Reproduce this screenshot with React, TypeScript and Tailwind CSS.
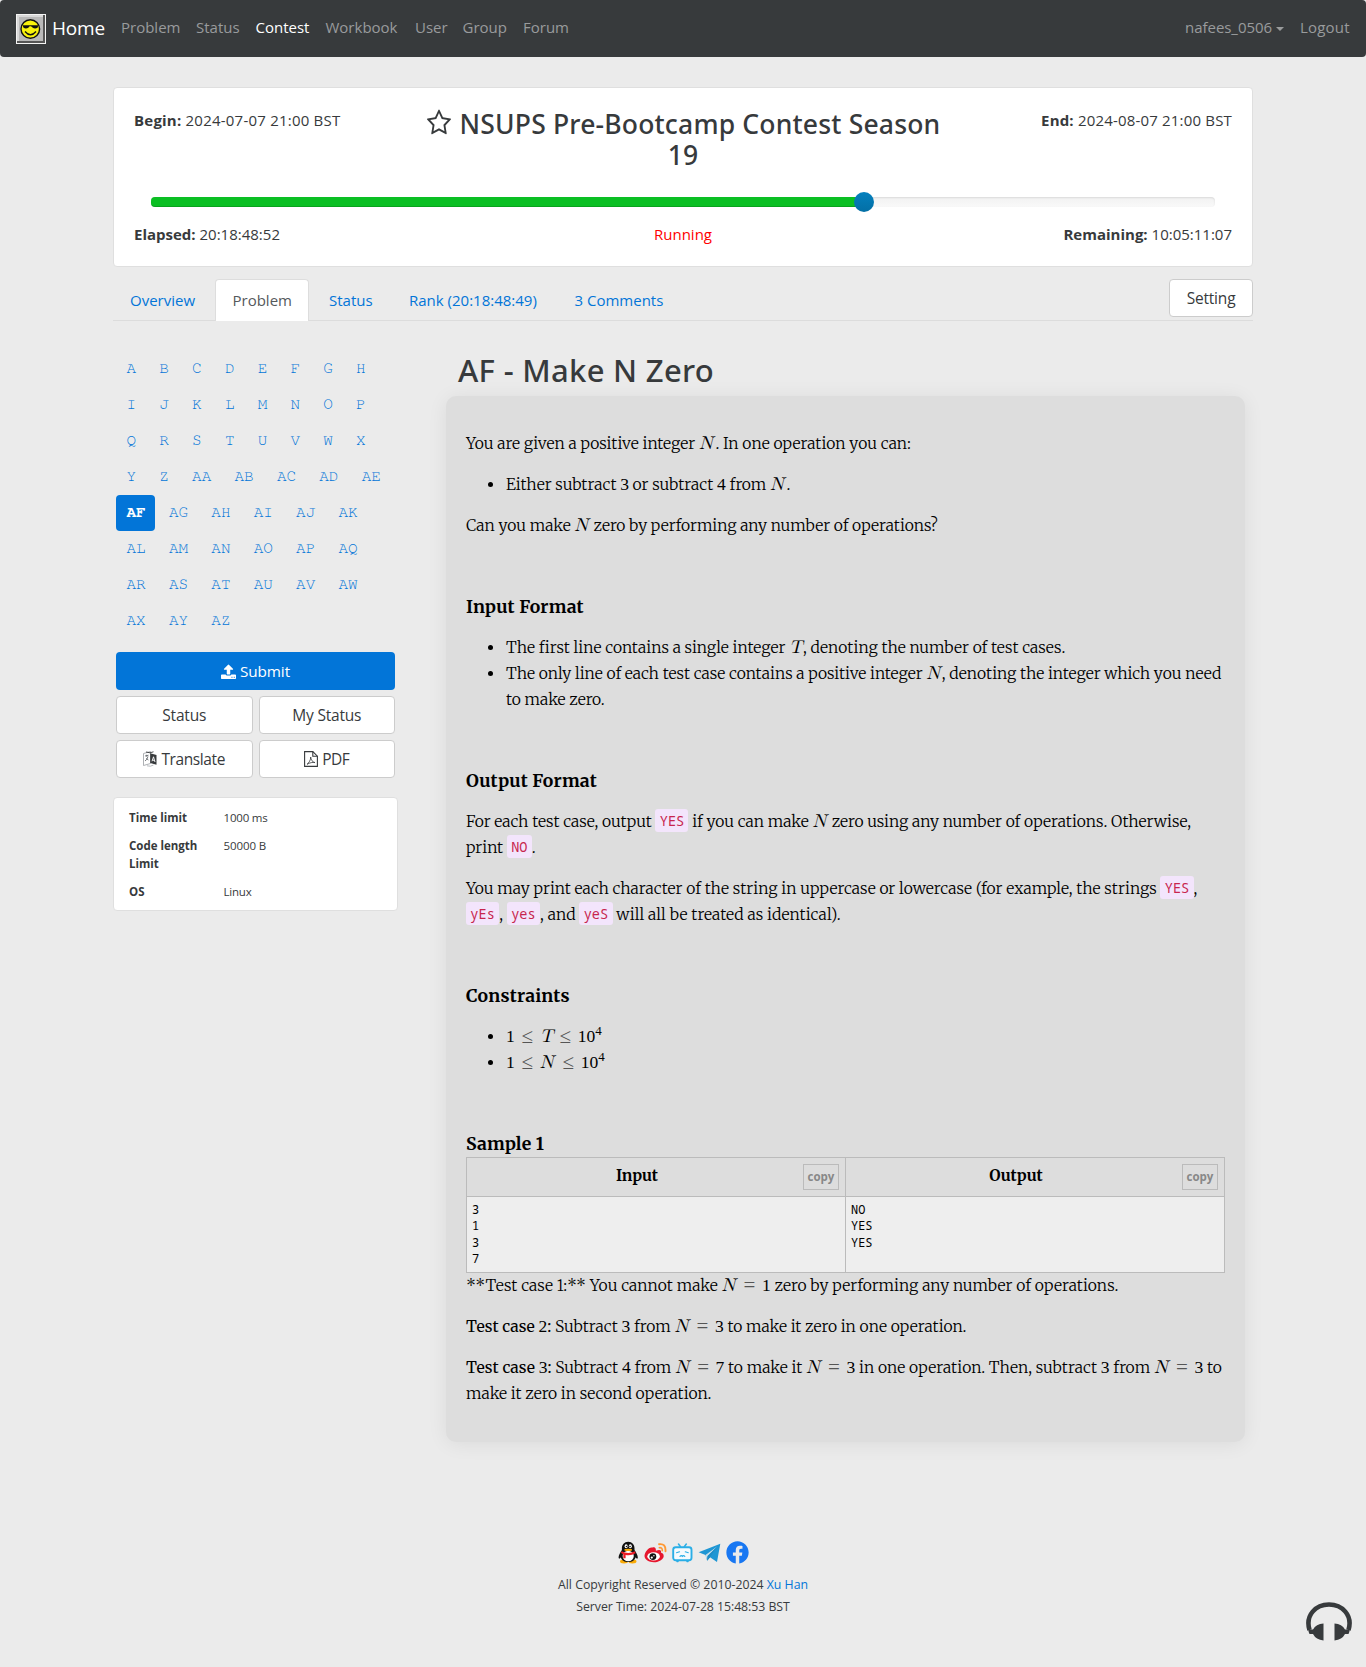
import type { ReactNode } from 'react';
import { FaFacebook } from 'react-icons/fa';

const problemRows = [
  ['A', 'B', 'C', 'D', 'E', 'F', 'G', 'H'],
  ['I', 'J', 'K', 'L', 'M', 'N', 'O', 'P'],
  ['Q', 'R', 'S', 'T', 'U', 'V', 'W', 'X'],
  ['Y', 'Z', 'AA', 'AB', 'AC', 'AD', 'AE'],
  ['AF', 'AG', 'AH', 'AI', 'AJ', 'AK'],
  ['AL', 'AM', 'AN', 'AO', 'AP', 'AQ'],
  ['AR', 'AS', 'AT', 'AU', 'AV', 'AW'],
  ['AX', 'AY', 'AZ'],
];

function Logo() {
  return (
    <svg width="30" height="30" viewBox="0 0 30 30" className="shrink-0">
      <rect width="30" height="30" fill="#f4f4f4" />
      <rect x="1" y="1" width="28" height="28" fill="#555" />
      <rect x="1" y="1" width="26" height="26" fill="#d8d8d8" />
      <rect x="3" y="3" width="24" height="24" fill="#b9b9b9" />
      <circle cx="14.3" cy="15" r="9.3" fill="#f8f20c" stroke="#111" strokeWidth="1.4" />
      <path d="M6.500 11.200h16l-1 2.500q-2.600 1.600-5-.3L15 12.300h-1.400l-1 1.200q-2.600 1.800-5 .2z" fill="#111" />
      <path d="M9 17.500q5.500 6.500 11 0" fill="none" stroke="#111" strokeWidth="1.300" />
    </svg>
  );
}

function StarIcon() {
  return (
    <svg width="26" height="28" viewBox="0 0 1792 1792" preserveAspectRatio="none" fill="currentColor" className="mr-[8px] inline-block align-[-3px]">
      <path d="M1201 1004l306-297-422-62-189-382-189 382-422 62 306 297-73 421 378-199 377 199zm527-357q0 22-26 48l-363 354 86 500q1 7 1 20 0 50-41 50-19 0-40-12l-449-236-449 236q-22 12-40 12-21 0-31.500-14.500t-10.500-35.500q0-6 2-20l86-500-364-354q-25-27-25-48 0-37 56-46l502-73 225-455q19-41 49-41t49 41l225 455 502 73q56 9 56 46z" />
    </svg>
  );
}

function UploadIcon() {
  return (
    <svg width="15" height="15" viewBox="64 0 1664 1664" fill="currentColor">
      <path d="M1344 1472q0-26-19-45t-45-19-45 19-19 45 19 45 45 19 45-19 19-45zm256 0q0-26-19-45t-45-19-45 19-19 45 19 45 45 19 45-19 19-45zm128-224v320q0 40-28 68t-68 28h-1472q-40 0-68-28t-28-68v-320q0-40 28-68t68-28h427q21 56 70.500 92t110.500 36h256q61 0 110.500-36t70.500-92h427q40 0 68 28t28 68zm-325-648q-17 40-59 40h-256v448q0 26-19 45t-45 19h-256q-26 0-45-19t-19-45v-448h-256q-42 0-59-40-17-39 14-69l448-448q18-19 45-19t45 19l448 448q31 30 14 69z" />
    </svg>
  );
}

function PdfIcon() {
  return (
    <svg width="14" height="16" viewBox="0 0 14 16" fill="none" stroke="#373a3c">
      <path d="M.6.6h8.200l4.600 4.600v10.200H.6z" strokeWidth="1.100" />
      <path d="M8.800.6v4.600h4.600" strokeWidth="1.100" />
      <path d="M3 13.300c2-1.500 3.800-4.300 3.700-7.300.2 3 1.700 4.900 4.300 5.600-2.500-.5-5 0-8 1.700z" strokeWidth=".8" />
    </svg>
  );
}

function LanguageIcon() {
  return (
    <svg width="14" height="16" viewBox="0 0 14 16">
      <path d="M.5 2.500L7.500 .5v12L.5 14.500z" fill="#fff" stroke="#a5a8ad" strokeWidth=".9" />
      <path d="M2 5l3.500-.8M3.500 3.800q.8 1 .2 2M5 5.500Q4 9 2 10M3 7.500l2.500 1.500" stroke="#555a60" strokeWidth=".8" fill="none" />
      <path d="M7.200 2.300l6.300 1.800v9.600L7.200 12z" fill="#373a3c" />
      <path d="M3 1l4 .8 3.500-1" stroke="#373a3c" strokeWidth=".9" fill="none" />
      <path d="M9 10.300l1.500-4.500 1.500 5.200M9.500 9l2 .5" stroke="#fff" strokeWidth=".9" fill="none" />
      <path d="M4 14.800q3.500 1.200 6.500-.8" stroke="#a5a8ad" strokeWidth=".8" fill="none" />
    </svg>
  );
}

function QqIcon() {
  return (
    <svg width="21" height="23" viewBox="0 0 21 23">
      <ellipse cx="6" cy="20.500" rx="4" ry="1.900" fill="#faab07" />
      <ellipse cx="14.500" cy="20.500" rx="4" ry="1.900" fill="#faab07" />
      <path d="M10.200 .8c4 0 6.300 3 6.300 6.500v1.800c1.800 2.700 3.300 5.200 3.300 7.400 0 1.400-.9 1.800-2.300-.2-.6 3.200-3.500 4.800-7.300 4.800s-6.700-1.600-7.300-4.800c-1.400 2-2.300 1.600-2.300.2 0-2.200 1.500-4.700 3.300-7.400V7.300C3.900 3.800 6.200.8 10.200.8z" fill="#111" />
      <ellipse cx="10.200" cy="15" rx="5.600" ry="5.300" fill="#fff" />
      <path d="M3.500 10.200q6.700 3.600 13.500 0l.6 2q-3.500 2-7 2-1.600 0-3-.3v3.300H5.300v-4l-2.300-1.200z" fill="#eb1c26" />
      <ellipse cx="8.100" cy="5.300" rx="1.500" ry="2" fill="#fff" />
      <ellipse cx="12.300" cy="5.300" rx="1.500" ry="2" fill="#fff" />
      <circle cx="8.500" cy="5.500" r=".8" fill="#111" />
      <circle cx="12" cy="5.500" r=".8" fill="#111" />
      <ellipse cx="10.200" cy="8.900" rx="3.900" ry="1.100" fill="#faab07" />
    </svg>
  );
}

function WeiboIcon() {
  return (
    <svg width="23" height="20" viewBox="0 0 23 20">
      <path d="M8.500 4.500C5 3.500.5 9 .5 13c0 3.700 4.600 6.200 9.300 6.200 5.700 0 9.900-3.200 9.900-6.300 0-2-1.600-2.900-2.800-3.300.8-2.300-.8-3.600-5-1.900C12.200 5.500 10.900 3.300 8.500 4.500z" fill="#e6162d" />
      <ellipse cx="9.600" cy="13.400" rx="6.300" ry="4.200" fill="#fff" />
      <circle cx="8.900" cy="13.600" r="3.400" fill="#111" />
      <circle cx="7.800" cy="14.600" r="1.100" fill="#fff" />
      <circle cx="9.900" cy="12.800" r=".7" fill="#fff" />
      <path d="M15 1.200q7-1 6.500 7" fill="none" stroke="#ff9933" strokeWidth="1.900" strokeLinecap="round" />
      <path d="M15.300 4.700q3.200-.3 3 3" fill="none" stroke="#ff9933" strokeWidth="1.600" strokeLinecap="round" />
    </svg>
  );
}

function BilibiliIcon() {
  return (
    <svg width="21" height="20" viewBox="0 0 21 20" fill="none" stroke="#2aaee6" strokeWidth="1.900" strokeLinecap="round">
      <rect x="1.200" y="4.200" width="18.300" height="13" rx="2.500" fill="#f5fafd" />
      <path d="M6.500 1l2 2.800M14.300 1l-2 2.800" strokeWidth="1.500" />
      <path d="M4.500 9.700l3-.9M16.300 9.700l-3-.9M8 13.300q1.200-1.200 2.400 0 1.200-1.200 2.400 0" strokeWidth="1.200" />
      <path d="M5 18.600h1M15 18.600h1" strokeWidth="1.500" />
    </svg>
  );
}

function TelegramIcon() {
  return (
    <svg width="23" height="20" viewBox="0 0 23 20">
      <path d="M.6 9.200L22.300.8 19 18.900l-7-4.700-2.900 3.500-1.600-5.800z" fill="#1e96d4" />
      <path d="M7.500 11.900L19.500 3.300 9.600 13.100l-.5 4.600z" fill="#c9dfea" />
      <path d="M9.600 13.100L19.500 3.300 12 14.200l-2.900 3.500z" fill="#1e8cc6" />
    </svg>
  );
}

function HeadphonesIcon() {
  return (
    <svg width="46" height="39" viewBox="0 0 46 39" fill="#373a3c">
      <path d="M3.500 28C-1 13 10 2.500 23 2.500S47 13 42.500 28" fill="none" stroke="#373a3c" strokeWidth="4.600" />
      <path d="M17.500 21.500v17q-7.500-.6-10.500-6.500H3.500q-1-1.500-1.200-4.500H7q3-5.500 10.500-6z" />
      <path d="M28.500 21.500v17q7.500-.6 10.500-6.500h3.500q1-1.500 1.200-4.500H39q-3-5.500-10.500-6z" />
    </svg>
  );
}

function NavLink({ children, active, className }: { children: ReactNode; active?: boolean; className: string }) {
  return <a className={`block whitespace-nowrap ${active ? 'text-white' : 'text-[#999b9c]'} ${className}`}>{children}</a>;
}

/* Inline math variable in italic */
function V({ children, className = 'w-[15.500px]' }: { children: ReactNode; className?: string }) {
  return <span className={`inline-block text-left font-['Latin_Modern_Math','STIX_Two_Text','Liberation_Serif',serif] text-[18.500px] font-normal italic leading-none ${className}`}>{children}</span>;
}

function D({ children }: { children: ReactNode }) {
  return <span className="font-['Liberation_Serif',serif] text-[17.500px] font-normal leading-none">{children}</span>;
}

function Rel({ children }: { children: ReactNode }) {
  return <span className="relative top-px mx-[5px] inline-block w-[15px] text-center font-['Liberation_Serif',serif] text-[21px] leading-none text-[#555]">{children}</span>;
}

function Code({ children }: { children: ReactNode }) {
  return <code className="relative -top-px rounded-[3px] bg-[#f3e5fc] px-[4.300px] py-[2px] font-['Noto_Sans_Mono','DejaVu_Sans_Mono',monospace] text-[13.600px] font-normal text-[#c7254e]">{children}</code>;
}

function Line({ children, className = '' }: { children: ReactNode; className?: string }) {
  return <span className={`block h-[26px] whitespace-nowrap ${className}`}>{children}</span>;
}

function Bullet({ children }: { children: ReactNode }) {
  return (
    <li className="flex pl-[22px]">
      <span className="mt-[10px] mr-[13px] h-[5px] w-[5px] shrink-0 rounded-full bg-black" />
      <div>{children}</div>
    </li>
  );
}

function Heading({ children, className = '' }: { children: ReactNode; className?: string }) {
  return <h3 className={`h-[26px] text-[17.600px] font-bold leading-[24px] tracking-[0.2px] whitespace-nowrap ${className}`}>{children}</h3>;
}

function Button({ children, className = '' }: { children: ReactNode; className?: string }) {
  return <button className={`flex h-[38px] items-center justify-center rounded border border-[#ccc] bg-white text-[15.500px] tracking-[-0.2px] ${className}`}>{children}</button>;
}

function CopyHeader({ children }: { children: ReactNode }) {
  return (
    <div className="flex h-[38px] items-start bg-[#ddd] pt-[5px]">
      <span className="flex-1 pl-[4px] text-center text-[15.500px] font-bold">{children}</span>
      <span className="mt-px mr-[6px] flex h-[26px] w-[36px] items-center justify-center border border-[#bbb] font-['Open_Sans',sans-serif] text-[11.500px] font-bold text-[#888]">copy</span>
    </div>
  );
}

export default function App() {
  return (
    <div className="min-h-[1667px] w-[1366px] bg-[#ebebeb] font-['Open_Sans',sans-serif] text-[15px] leading-[24px] text-[#373a3c]">
      <nav className="flex h-[57px] items-center rounded bg-[#373a3c] px-[16px]">
        <Logo />
        <a className="ml-[6px] w-[69px] pb-[2px] text-[19px] tracking-[-0.2px] text-white">Home</a>
        <div className="flex h-[28px] flex-1 items-start">
          <NavLink className="w-[75px]">Problem</NavLink>
          <NavLink className="w-[59.500px]">Status</NavLink>
          <NavLink className="w-[70px]" active>Contest</NavLink>
          <NavLink className="w-[89.500px]">Workbook</NavLink>
          <NavLink className="w-[47.500px]">User</NavLink>
          <NavLink className="w-[60.500px]">Group</NavLink>
          <NavLink className="w-[46px]">Forum</NavLink>
        </div>
        <div className="flex h-[28px] items-start">
          <NavLink className="tracking-[-0.05px]">nafees_0506</NavLink>
          <span className="mt-[12px] mr-[16px] ml-[4px] border-x-[4.500px] border-t-[4.500px] border-x-transparent border-t-[#999b9c]" />
          <NavLink className="w-[50px] tracking-[0.2px]">Logout</NavLink>
        </div>
      </nav>

      <main className="mx-auto mt-[30px] w-[1140px]">
        <section className="h-[180px] rounded border border-[#dfdfdf] bg-white px-[20px]">
          <div className="flex h-[100px] items-start justify-between pt-[20px]">
            <div className="w-[230px] whitespace-nowrap tracking-[0.220px]"><b>Begin:</b> 2024-07-07 21:00 BST</div>
            <h3 className="w-[540px] pt-px text-center font-['Noto_Sans','Open_Sans',sans-serif] text-[26.500px] font-medium leading-[31px] tracking-[0.180px]">
              <StarIcon />NSUPS Pre-Bootcamp Contest Season<br />19
            </h3>
            <div className="w-[230px] text-right whitespace-nowrap tracking-[0.180px]"><b>End:</b> 2024-08-07 21:00 BST</div>
          </div>
          <div className="mx-[17px] mt-[9px] h-[10px] rounded bg-gradient-to-b from-[#f2f2f2] to-[#f9f9f9] shadow-[inset_0_1px_2px_rgba(0,0,0,0.1)]">
            <div className="relative h-[10px] w-[713px] rounded-l bg-[#0bbf23] shadow-[inset_0_-1px_0_rgba(0,0,0,0.15)]">
              <span className="absolute top-[-5px] right-[-10px] h-[20px] w-[20px] rounded-full bg-gradient-to-b from-[#0480be] to-[#036fa5]" />
            </div>
          </div>
          <div className="mt-[15px] grid grid-cols-3">
            <div><b>Elapsed:</b> 20:18:48:52</div>
            <div className="text-center text-[red]">Running</div>
            <div className="text-right"><b>Remaining:</b> 10:05:11:07</div>
          </div>
        </section>

        <div className="mt-[12px] flex h-[42px] items-start justify-between border-b border-[#dcdcdc]">
          <div className="flex leading-[42px]">
            <a className="w-[102px] pl-[17px] text-[#0275d8]">Overview</a>
            <a className="h-[42px] w-[94px] rounded-t border border-b-0 border-[#ddd] bg-white pl-[16.500px] leading-[40px] text-[#55595c]">Problem</a>
            <a className="w-[100px] pl-[20px] text-[#0275d8]">Status</a>
            <a className="w-[165.500px] text-[#0275d8]">Rank (20:18:48:49)</a>
            <a className="text-[#0275d8]">3 Comments</a>
          </div>
          <Button className="w-[84px]">Setting</Button>
        </div>

        <div className="flex">
          <aside className="w-[285px] pt-[30px]">
            <div className="pl-[3px] font-['Courier_10_Pitch','Nimbus_Mono_PS','FreeMono','Cutive_Mono','Courier_Prime','Liberation_Mono',monospace] text-[16px] leading-[34px] text-[#0275d8]">
              {problemRows.map((row) => (
                <div key={row[0]} className="flex h-[36px] gap-[3.200px]">
                  {row.map((id) => (
                    <a key={id} className={`h-[36px] rounded pr-[9.500px] pl-[10.500px] ${id === 'AF' ? 'bg-[#0275d8] font-bold text-white' : ''}`}>{id}</a>
                  ))}
                </div>
              ))}
            </div>
            <div className="mt-[13px] grid grid-cols-2 gap-[6px] px-[3px]">
              <button className="col-span-2 flex h-[38px] items-center justify-center gap-[4px] rounded bg-[#0275d8] text-[15.300px] tracking-[-0.1px] text-white">
                <UploadIcon />Submit
              </button>
              <Button>Status</Button>
              <Button>My Status</Button>
              <Button className="gap-[4px] tracking-[-0.4px]"><LanguageIcon />Translate</Button>
              <Button className="gap-[4px] tracking-[-0.5px]"><PdfIcon />PDF</Button>
            </div>
            <dl className="mt-[19px] h-[114px] rounded border border-[#dfdfdf] bg-white px-[15px] pt-[11px] text-[11.500px] leading-[18px]">
              <div className="mb-[10px] flex"><dt className="w-[94.500px] font-bold">Time limit</dt><dd className="tracking-[-0.2px]">1000 ms</dd></div>
              <div className="mb-[10px] flex"><dt className="w-[94.500px] pr-[15px] font-bold">Code length Limit</dt><dd className="tracking-[-0.1px]">50000 B</dd></div>
              <div className="flex"><dt className="w-[94.500px] font-bold">OS</dt><dd className="tracking-[-0.2px]">Linux</dd></div>
            </dl>
          </aside>

          <article className="ml-[48px] w-[799px] pt-[32px]">
            <h2 className="h-[43px] pl-[12px] font-['Noto_Sans','Open_Sans',sans-serif] text-[31px] font-medium leading-[35px] tracking-[0.3px]">AF - Make N Zero</h2>
            <div className="h-[1046px] rounded-[10px] bg-[#ddd] px-[20px] pt-[35px] font-[Merriweather,'Noto_Serif',serif] text-[15.730px] font-light leading-[26px] text-black shadow-[0_2px_20px_rgba(0,0,0,0.07)]">
              <Line>You are given a positive integer <V className="w-[16.500px]">N</V>. In one operation you can:</Line>
              <ul className="mt-[15px]">
                <Bullet><Line>Either subtract <D>3</D> or subtract <D>4</D> from <V className="w-[16.500px]">N</V>.</Line></Bullet>
              </ul>
              <p className="mt-[15px]"><Line className="tracking-[-0.03px]">Can you make <V>N</V> zero by performing any number of operations?</Line></p>
              <Heading className="mt-[56px]">Input Format</Heading>
              <ul className="mt-[14px]">
                <Bullet><Line>The first line contains a single integer <V className="w-[14px]">T</V>, denoting the number of test cases.</Line></Bullet>
                <Bullet>
                  <Line className="tracking-[-0.02px]">The only line of each test case contains a positive integer <V>N</V>, denoting the integer which you need</Line>
                  <Line>to make zero.</Line>
                </Bullet>
              </ul>
              <Heading className="mt-[56px]">Output Format</Heading>
              <p className="mt-[14px]">
                <Line className="tracking-[-0.02px]">For each test case, output <Code>YES</Code> if you can make <V>N</V> zero using any number of operations. Otherwise,</Line>
                <Line>print <Code>NO</Code>.</Line>
              </p>
              <p className="mt-[15px]">
                <Line className="tracking-[0.02px]">You may print each character of the string in uppercase or lowercase (for example, the strings <Code>YES</Code>,</Line>
                <Line className="tracking-[0.05px]"><Code>yEs</Code>, <Code>yes</Code>, and <Code>yeS</Code> will all be treated as identical).</Line>
              </p>
              <Heading className="mt-[56px]">Constraints</Heading>
              <ul className="mt-[14px]">
                <Bullet><Line><D>1</D><Rel>≤</Rel><V className="w-[13px]">T</V><Rel>≤</Rel><D>10</D><sup className="top-[-7px] font-['Liberation_Serif',serif] text-[13px] font-normal">4</sup></Line></Bullet>
                <Bullet><Line><D>1</D><Rel>≤</Rel><V className="w-[16px]">N</V><Rel>≤</Rel><D>10</D><sup className="top-[-7px] font-['Liberation_Serif',serif] text-[13px] font-normal">4</sup></Line></Bullet>
              </ul>
              <Heading className="mt-[56px]">Sample 1</Heading>
              <div className="-mt-px grid grid-cols-2 gap-px border border-[#bbb] bg-[#bbb]">
                <CopyHeader>Input</CopyHeader>
                <CopyHeader>Output</CopyHeader>
                <pre className="h-[75px] bg-[#eee] px-[5px] pt-[4px] font-['Noto_Sans_Mono','DejaVu_Sans_Mono',monospace] text-[11.900px] font-normal leading-[16.300px]">{'3\n1\n3\n7'}</pre>
                <pre className="h-[75px] bg-[#eee] px-[5px] pt-[4px] font-['Noto_Sans_Mono','DejaVu_Sans_Mono',monospace] text-[11.900px] font-normal leading-[16.300px]">{'NO\nYES\nYES'}</pre>
              </div>
              <p><Line className="tracking-[0.02px]">**Test case 1:** You cannot make <V>N</V><Rel>=</Rel><D>1</D> zero by performing any number of operations.</Line></p>
              <p className="mt-[15px]"><Line><b>Test case <D>2</D>:</b> Subtract <D>3</D> from <V>N</V><Rel>=</Rel><D>3</D> to make it zero in one operation.</Line></p>
              <p className="mt-[15px]">
                <Line className="tracking-[0.02px]"><b>Test case <D>3</D>:</b> Subtract <D>4</D> from <V>N</V><Rel>=</Rel><D>7</D> to make it <V>N</V><Rel>=</Rel><D>3</D> in one operation. Then, subtract <D>3</D> from <V>N</V><Rel>=</Rel><D>3</D> to</Line>
                <Line>make it zero in second operation.</Line>
              </p>
            </div>
          </article>
        </div>
      </main>

      <footer className="mt-[97px] text-center text-[12.300px]">
        <div className="flex h-[27px] items-center justify-center gap-[5px] pl-px">
          <QqIcon /><WeiboIcon /><BilibiliIcon /><TelegramIcon />
          <FaFacebook size={23} color="#1877f2" />
        </div>
        <div className="mt-[7px] leading-[24px]">All Copyright Reserved © 2010-2024 <a className="text-[#0275d8]">Xu Han</a></div>
        <div className="leading-[20px] tracking-[-0.05px]">Server Time: 2024-07-28 15:48:53 BST</div>
      </footer>
      <div className="fixed right-[14px] bottom-[26px]"><HeadphonesIcon /></div>
    </div>
  );
}
